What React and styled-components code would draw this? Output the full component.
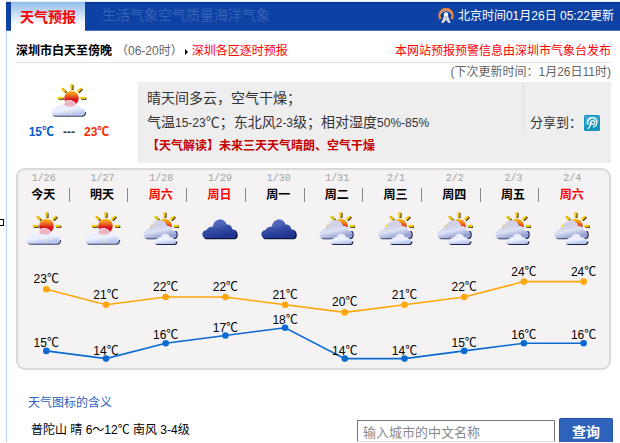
import React, { useState } from "react";
import styled, { createGlobalStyle, ThemeProvider } from "styled-components";

const theme = {
  colors: {
    navy: "#0d41a3",
    high: "#ffa70a",
    low: "#0b6ad2",
    red: "#fe0000",
    crimson: "#c40000",
    gray: "#666666",
    silver: "#a3a3a3",
    panel: "#f4f2f3",
    smoke: "#eeeeee",
    link: "#2b5fc4",
  },
  fonts: {
    sans: `"Liberation Sans", "Noto Sans CJK SC", sans-serif`,
    mono: `"Liberation Mono", "Noto Sans CJK SC", monospace`,
  },
};

const GlobalStyle = createGlobalStyle`
  *, *::before, *::after { box-sizing: border-box; }
  body {
    margin: 0;
    background: #ffffff;
    color: #000000;
    font-family: ${theme.fonts.sans};
    font-size: 12px;
    line-height: 16px;
  }
  a { color: inherit; text-decoration: none; }
  p, h1, h2, ol { margin: 0; padding: 0; font-size: inherit; }
  svg { display: block; flex-shrink: 0; }
`;

const Page = styled.div`
  display: flex;
  padding-top: 1px;
`;
const Gutter = styled.div`
  flex: 0 0 6px;
  padding-top: 218px;
`;
const Handle = styled.div`
  width: 4px;
  height: 7px;
  border: 1px solid #000000;
  border-left: none;
`;
const Widget = styled.main`
  flex: 1;
  min-width: 0;
  border-left: 1px solid #b9d3ef;
`;

const Header = styled.header`
  display: flex;
  height: 30px;
  margin-left: -1px;
  padding: 0 6px 0 5px;
  background: linear-gradient(#dfe8f6 1px, #06338f 1px, ${(props) => props.theme.colors.navy} 4px);
  box-shadow: inset 0 -1px 0 #4471c4;
`;
const ActiveTab = styled.a`
  margin-top: 1px;
  padding: 0 9px;
  background: linear-gradient(#93bdeb, #ffffff 80%);
  color: ${(props) => props.theme.colors.red};
  font-size: 14px;
  font-weight: bold;
  line-height: 30px;
`;
const TabLinks = styled.nav`
  display: flex;
  margin-left: 17px;
  color: #3562b6;
  font-size: 14px;
  line-height: 29px;
`;
const Clock = styled.div`
  display: flex;
  align-items: center;
  gap: 4px;
  margin-left: auto;
  color: #ffffff;
  white-space: nowrap;
`;

const Content = styled.div`
  padding: 0 9px;
`;
const TitleRow = styled.div`
  display: flex;
  align-items: center;
  padding-top: 10px;
  border-bottom: 1px solid #dce4e6;
  line-height: 21px;
  white-space: nowrap;
`;
const Hours = styled.span`
  margin: 0 2px 0 4px;
  color: ${(props) => props.theme.colors.gray};
`;
const HourlyLink = styled.a`
  display: flex;
  align-items: center;
  gap: 4px;
  color: ${(props) => props.theme.colors.red};
  &::before {
    content: "";
    border: 3px solid transparent;
    border-left-color: #000000;
    border-right-width: 0;
  }
`;
const Source = styled.span`
  margin-left: auto;
  color: ${(props) => props.theme.colors.red};
`;
const NextUpdate = styled.p`
  color: ${(props) => props.theme.colors.gray};
  line-height: 19px;
  text-align: right;
`;

const Summary = styled.section`
  display: flex;
`;
const Today = styled.div`
  display: flex;
  flex: 0 0 122px;
  flex-direction: column;
  align-items: center;
  gap: 7px;
  padding: 2px 16px 0 0;
`;
const TodayTemps = styled.p`
  display: flex;
  gap: 9px;
  color: #333333;
  font-weight: bold;
`;
const Temp = styled.span`
  color: ${(props) => (props.$hot ? "#ff2a00" : "#0a5bc8")};
`;
const Details = styled.div`
  display: flex;
  flex: 1;
  padding: 4px 0 5px 9px;
  background: ${(props) => props.theme.colors.smoke};
`;
const DetailText = styled.div`
  flex: 1;
  color: #333333;
  font-size: 14px;
  line-height: 24px;
  white-space: nowrap;
`;
const Figure = styled.span`
  font-size: 12px;
  line-height: 1;
`;
const Reading = styled.a`
  display: block;
  color: ${(props) => props.theme.colors.crimson};
  font-size: 12px;
  font-weight: bold;
`;
const Share = styled.div`
  display: flex;
  flex: 0 0 88px;
  align-items: center;
  align-self: flex-start;
  gap: 2px;
  height: 48px;
  padding: 25px 0 0 6px;
  border-left: 1px dotted #d2d2d2;
  color: #333333;
  font-size: 13px;
  white-space: nowrap;
`;

const Forecast = styled.section`
  margin-top: 5px;
  border: 2px solid #d9d9d9;
  border-radius: 9px;
  background: ${(props) => props.theme.colors.panel};
`;
const Days = styled.ol`
  display: grid;
  grid-template-columns: repeat(10, 1fr);
  padding: 3px 4px 0 0;
  list-style: none;
`;
const Day = styled.li`
  display: flex;
  flex-direction: column;
  align-items: center;
  padding-right: 7px;
`;
const DayDate = styled.span`
  color: ${(props) => props.theme.colors.silver};
  font-family: ${(props) => props.theme.fonts.mono};
  font-size: 10px;
  line-height: 12px;
`;
const DayName = styled.span`
  align-self: stretch;
  margin: 3px 0 10px;
  border-right: 1px solid #888888;
  color: ${(props) => (props.$weekend ? props.theme.colors.red : "#000000")};
  font-weight: bold;
  line-height: 14px;
  text-align: center;
  ${Day}:last-child & {
    border-color: transparent;
  }
`;

const Footer = styled.footer`
  padding: 25px 7px 0 21px;
`;
const LegendLink = styled.a`
  color: ${(props) => props.theme.colors.link};
`;
const SearchRow = styled.form`
  display: flex;
  align-items: center;
  height: 24px;
  margin-top: 7px;
`;
const CityReport = styled.p`
  flex: 1;
  padding-left: 3px;
  white-space: nowrap;
`;
const CityInput = styled.input`
  align-self: flex-end;
  width: 198px;
  height: 22px;
  margin-right: 4px;
  padding: 2px 5px 0;
  border: 1px solid #777777;
  border-bottom-color: #dddddd;
  border-radius: 0;
  font-family: inherit;
  font-size: 13px;
  &::placeholder {
    color: #8a8a8a;
    opacity: 1;
  }
`;
const SearchButton = styled.button`
  width: 54px;
  height: 24px;
  padding: 3px 0 0;
  border: 1px solid #2455ae;
  border-bottom: none;
  border-radius: 2px 2px 0 0;
  background: #2f63bb;
  color: #ffffff;
  font-family: inherit;
  font-size: 14px;
  font-weight: bold;
  line-height: 20px;
`;

const days = [
  { date: "1/26", name: "今天", icon: "sunny", high: 23, low: 15 },
  { date: "1/27", name: "明天", icon: "sunny", high: 21, low: 14 },
  { date: "1/28", name: "周六", icon: "partly", high: 22, low: 16, weekend: true },
  { date: "1/29", name: "周日", icon: "overcast", high: 22, low: 17, weekend: true },
  { date: "1/30", name: "周一", icon: "overcast", high: 21, low: 18 },
  { date: "1/31", name: "周二", icon: "partly", high: 20, low: 14 },
  { date: "2/1", name: "周三", icon: "partly", high: 21, low: 14 },
  { date: "2/2", name: "周四", icon: "partly", high: 22, low: 15 },
  { date: "2/3", name: "周五", icon: "partly", high: 24, low: 16 },
  { date: "2/4", name: "周六", icon: "partly", high: 24, low: 16, weekend: true },
];

// gradients shared by all the weather icons
const IconDefs = () => (
  <svg width="0" height="0" aria-hidden="true">
    <defs>
      <linearGradient id="sun" x1="0" y1="0" x2="0" y2="1">
        <stop offset="0" stopColor="#ffc61c" />
        <stop offset="0.35" stopColor="#ee6a1e" />
        <stop offset="0.6" stopColor="#d81420" />
      </linearGradient>
      <linearGradient id="white" x1="0" y1="0" x2="0.3" y2="1">
        <stop offset="0" stopColor="#f0eaf8" />
        <stop offset="0.7" stopColor="#eaf0ff" />
        <stop offset="1" stopColor="#b8c6ee" />
      </linearGradient>
      <linearGradient id="lilac" x1="0" y1="0" x2="0.4" y2="1">
        <stop offset="0" stopColor="#dad8ec" />
        <stop offset="0.4" stopColor="#d0cfe6" />
        <stop offset="0.65" stopColor="#dde2f6" />
        <stop offset="1" stopColor="#929fd0" />
      </linearGradient>
      <linearGradient id="blue" x1="0" y1="0" x2="0.4" y2="1">
        <stop offset="0" stopColor="#5268c0" />
        <stop offset="0.5" stopColor="#3c54aa" />
        <stop offset="1" stopColor="#1f348e" />
      </linearGradient>
    </defs>
  </svg>
);

const Sun = ({ x, y }) => {
  const rays = [-180, -135, -90, -45, 0];
  return (
    <g transform={`translate(${x} ${y})`}>
      {rays.map((angle) => (
        <g key={angle}>
          <g transform={`translate(1 0.8) rotate(${angle})`}>
            <rect x="8.800" y="-1.1" width="5" height="2.2" fill="#3c3420" />
          </g>
          <g transform={`rotate(${angle})`}>
            <rect x="8.800" y="-1.1" width="5" height="2.2" fill="#f5c800" />
          </g>
        </g>
      ))}
      <circle r="7.300" fill="url(#sun)" />
    </g>
  );
};

const SunnyIcon = () => (
  <svg width="36" height="33" viewBox="0 0 36 33" aria-hidden="true">
    <Sun x={20.5} y={14} />
    <path
      d="M4 32.700C2 32.300 1 30.500 1.500 28H35.200C35.200 31 33.500 32.700 31.500 32.700Z"
      fill="#3a4262"
    />
    <path
      d="M3.500 31.800C-1 31-0.800 25 4 24C6 21.500 9.500 20.500 12 20.800C12.500 14.500 23.500 14.500 25.500 21.200C28 21.200 29.500 22.500 30 24C35 24.500 35.500 31.300 31 31.800Z"
      fill="url(#white)"
    />
    <path d="M13.200 20.500C14.500 15.200 22.500 15 24.500 20.500C23 23.500 15.500 23.500 13.200 20.500Z" fill="#ee8e9a" opacity="0.6" />
    <path d="M14.500 26.500L13.500 28M20 26.500V30M25.500 26L27 27.500" stroke="#efe6bd" strokeWidth="1.600" opacity="0.7" />
  </svg>
);

const PartlyIcon = () => (
  <svg width="36" height="33" viewBox="0 0 36 33" aria-hidden="true">
    <Sun x={21.5} y={14} />
    <path
      d="M5 27.300C1 27 1 23 4 21L33.500 19C35.800 22 35 27.300 31 27.300Z"
      fill="#1c2345"
    />
    <path
      d="M4.500 26.500C-1 25.500-1 19 4.500 18C5.500 15.500 8 14.800 9 14.800C10.500 6.500 22.500 6 24 14C27 13.500 29.500 15.500 29.500 18C34.500 19 35.500 25.500 30.500 26.500Z"
      fill="url(#lilac)"
    />
    <path d="M14 32.900C12 32 11.500 30.500 12 29.500H34.500C34.500 31.500 33.500 32.900 31.500 32.900Z" fill="#1c2340" />
    <path
      d="M13.500 32C10 31.500 10 27.500 14 27C14.500 25.500 16 25 17.500 25.300C18.500 20.500 26 20.500 27 25.300C29 25 30.500 26 30.800 27.300C34 28 34 31.500 31 32Z"
      fill="url(#white)"
    />
  </svg>
);

const OvercastIcon = () => (
  <svg width="36" height="33" viewBox="0 0 36 33" aria-hidden="true">
    <path
      d="M4.500 27.300C2 27 1 25 2 22.500L33 18C37 20.500 36.500 27.300 32.500 27.300Z"
      fill="#0b1130"
    />
    <path
      d="M4 26.200C-1 25.500-1 18.500 4.500 18C5.500 15.500 8.500 14.500 11 14.500C12 6 22.500 5.300 24.500 12.500C27.500 12 30 14.500 30.200 17C35.500 18 36 25.500 31.500 26.200Z"
      fill="url(#blue)"
    />
    <path d="M11 14.500C12 6 22.500 5.300 24.500 12.500C20 13.500 18.500 17.500 11 14.500Z" fill="#7186d2" opacity="0.25" />
  </svg>
);

const icons = { sunny: SunnyIcon, partly: PartlyIcon, overcast: OvercastIcon };

const AntennaIcon = () => (
  <svg width="16" height="16" viewBox="0 0 16 16" fill="none" aria-hidden="true">
    <path d="M2.500 11A6.500 6.500 0 1 1 13.500 11" stroke="#e9853a" strokeWidth="2.400" />
    <path d="M2.300 6A6.500 6.500 0 0 1 13.700 6" stroke="#ffc489" strokeWidth="1" />
    <path d="M7.500 6L4 15M8.500 6L12 15M6 11H10M6.500 9L11 14.500M9.500 9L5 14.500" stroke="#d5d8e0" strokeWidth="1.400" />
    <circle cx="8" cy="6.500" r="2.200" fill="#ffffff" />
  </svg>
);

const ShareIcon = () => (
  <svg width="16" height="16" viewBox="0 0 16 16" fill="none" aria-hidden="true">
    <rect width="16" height="16" rx="1.500" fill="#1494c0" />
    <path d="M1 1H15V7C10 7 5 8 1 11Z" fill="#5cc2dc" opacity="0.5" />
    <path d="M4 9.500A4.700 4.700 0 1 1 9 12" stroke="#ffffff" strokeWidth="1.400" />
    <path d="M4 14C5.500 12.500 6.500 11 6.700 7.500" stroke="#ffffff" strokeWidth="1.400" />
    <circle cx="8.700" cy="7.400" r="1.900" stroke="#ffffff" strokeWidth="1.200" />
  </svg>
);

const Chart = () => {
  const px = (i) => 28.3 + i * 59.7;
  const py = (t) => 44.3 + (23 - t) * 7.7;
  const series = [
    { key: "high", color: theme.colors.high, lift: 6 },
    { key: "low", color: theme.colors.low, lift: 4 },
  ];
  return (
    <svg width="100%" viewBox="0 0 591 123" role="img" aria-label="气温">
      {series.map(({ key, color, lift }) => (
        <g key={key}>
          <polyline
            points={days.map((d, i) => `${px(i)},${py(d[key])}`).join(" ")}
            fill="none"
            stroke={color}
            strokeWidth="1.600"
          />
          {days.map((d, i) => (
            <g key={d.date}>
              <circle cx={px(i)} cy={py(d[key])} r="3.300" fill={color} />
              <text x={px(i)} y={py(d[key]) - lift} fontSize="12" textAnchor="middle">
                {d[key]}℃
              </text>
            </g>
          ))}
        </g>
      ))}
    </svg>
  );
};

const App = () => {
  const [city, setCity] = useState("");

  return (
    <ThemeProvider theme={theme}>
      <GlobalStyle />
      <Page>
        <Gutter>
          <Handle />
        </Gutter>
        <Widget>
          <Header>
            <ActiveTab href="#forecast">天气预报</ActiveTab>
            <TabLinks>
              <a href="#life">生活气象</a>
              <a href="#air">空气质量</a>
              <a href="#ocean">海洋气象</a>
            </TabLinks>
            <Clock>
              <AntennaIcon />
              <span>北京时间01月26日 05:22更新</span>
            </Clock>
          </Header>
          <Content>
            <TitleRow>
              <h1>深圳市白天至傍晚</h1>
              <Hours>（06-20时）</Hours>
              <HourlyLink href="#hourly">深圳各区逐时预报</HourlyLink>
              <Source>本网站预报预警信息由深圳市气象台发布</Source>
            </TitleRow>
            <NextUpdate>(下次更新时间：1月26日11时)</NextUpdate>
            <Summary>
              <Today>
                <SunnyIcon />
                <TodayTemps>
                  <Temp>15℃</Temp>
                  <span>---</span>
                  <Temp $hot>23℃</Temp>
                </TodayTemps>
              </Today>
              <Details>
                <DetailText>
                  <p>晴天间多云，空气干燥；</p>
                  <p>
                    气温<Figure>15-23</Figure>℃；东北风<Figure>2-3</Figure>级；相对湿度
                    <Figure>50%-85%</Figure>
                  </p>
                  <Reading href="#reading">【天气解读】未来三天天气晴朗、空气干燥</Reading>
                </DetailText>
                <Share>
                  <span>分享到：</span>
                  <a href="#share" aria-label="分享">
                    <ShareIcon />
                  </a>
                </Share>
              </Details>
            </Summary>
            <Forecast id="forecast">
              <IconDefs />
              <Days>
                {days.map((day) => {
                  const Icon = icons[day.icon];
                  return (
                    <Day key={day.date}>
                      <DayDate>{day.date}</DayDate>
                      <DayName $weekend={day.weekend}>{day.name}</DayName>
                      <Icon />
                    </Day>
                  );
                })}
              </Days>
              <Chart />
            </Forecast>
          </Content>
          <Footer>
            <LegendLink href="#legend">天气图标的含义</LegendLink>
            <SearchRow onSubmit={(e) => e.preventDefault()}>
              <CityReport>普陀山 晴 6～12℃ 南风 3-4级</CityReport>
              <CityInput
                aria-label="城市"
                placeholder="输入城市的中文名称"
                value={city}
                onChange={(e) => setCity(e.target.value)}
              />
              <SearchButton type="submit">查询</SearchButton>
            </SearchRow>
          </Footer>
        </Widget>
      </Page>
    </ThemeProvider>
  );
};

export default App;
